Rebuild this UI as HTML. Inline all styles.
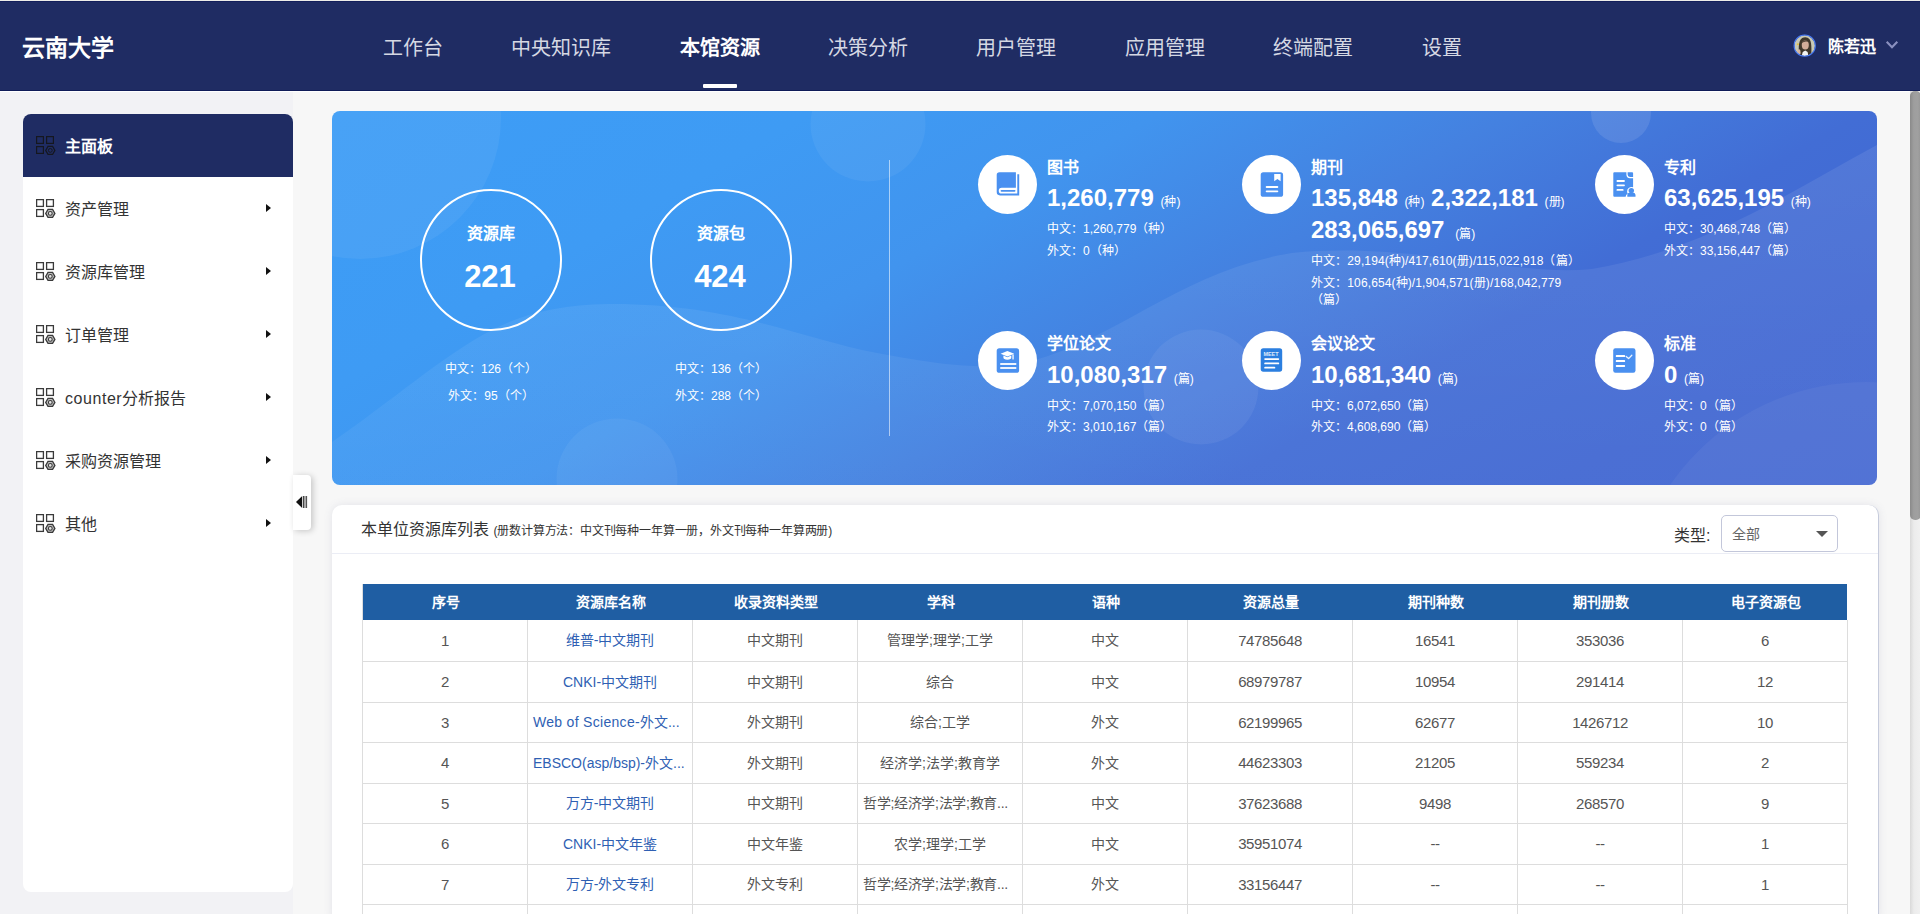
<!DOCTYPE html>
<html lang="zh-CN">
<head>
<meta charset="utf-8">
<title>云南大学</title>
<style>
*{box-sizing:border-box;margin:0;padding:0}
html,body{width:1920px;height:914px;overflow:hidden}
body{position:relative;background:#f7f7f7;font-family:"Liberation Sans",sans-serif;color:#333}
.abs{position:absolute}
#lbg{position:absolute;left:0;top:91px;width:293px;height:823px;background:#f2f2f5}
/* top nav */
#nav{position:absolute;left:0;top:0;width:1920px;height:91px;background:#1f2c63;border-bottom:1px solid #101c58;box-shadow:0 1px 0 #fff}
#logo{position:absolute;left:22px;top:33px;font-size:23px;line-height:30px;font-weight:bold;color:#fff;white-space:nowrap}
.ni{position:absolute;top:33px;font-size:20px;line-height:30px;color:#d5d8e3;white-space:nowrap}
.ni.on{color:#fff;font-weight:bold}
#uline{position:absolute;left:703px;top:84px;width:34px;height:4px;background:#fff;border-radius:1px}
#avatar{position:absolute;left:1793px;top:34.3px;width:23.4px;height:23.4px}
#chev{position:absolute;left:1885px;top:40px}
#uname{position:absolute;left:1827.5px;top:36px;font-size:16px;line-height:22px;font-weight:bold;color:#fff;white-space:nowrap}
/* sidebar */
#side{position:absolute;left:23px;top:114px;width:270px;height:778px;background:#fff;border-radius:8px;overflow:hidden}
.si{position:absolute;left:0;width:270px;height:63px}
.si.on{background:#1f2c63}
.si svg{position:absolute;left:13px;top:22px}
.si .t{position:absolute;left:42px;top:21px;font-size:16px;line-height:24px;color:#333;white-space:nowrap}
.si.on .t{color:#fff;font-weight:bold}
.si .ar{position:absolute;left:243px;top:27px;width:0;height:0;border-left:5px solid #111;border-top:4px solid transparent;border-bottom:4px solid transparent}
#handle{position:absolute;left:293px;top:475px;width:18px;height:55px;background:#fff;border-radius:0 4px 4px 0;box-shadow:2px 1px 6px rgba(0,0,0,.2)}
/* banner */
#ban{position:absolute;left:332px;top:111px;width:1545px;height:374px;border-radius:8px;overflow:hidden;background:linear-gradient(150deg,#3d9df6 0%,#3e9bf4 22%,#4194ee 38%,#4481e0 54%,#426dd5 70%,#4268d2 85%,#4266d1 100%)}

#ban .deco{position:absolute;left:0;top:0}
.ring{position:absolute;width:142px;height:142px;border:2px solid #fff;border-radius:50%;color:#fff;text-align:center}
.rl{position:absolute;left:0;width:138px;top:31px;font-size:16px;line-height:24px;font-weight:bold}
.rn{position:absolute;left:-1px;width:138px;top:66px;font-size:31px;line-height:40px;font-weight:bold}
.rs{position:absolute;width:222px;margin-top:1px;text-align:center;font-size:12px;line-height:20px;color:#fff;white-space:nowrap}
.vline{position:absolute;left:557px;top:49px;width:1px;height:276px;background:rgba(255,255,255,.55)}
.ic{position:absolute;width:59px;height:59px;border-radius:50%;background:#fff}
.ic svg{position:absolute;left:0;top:0}
.st{position:absolute;font-size:16px;line-height:24px;font-weight:bold;color:#fff;white-space:nowrap}
.sn{position:absolute;font-size:24px;line-height:32px;font-weight:bold;color:#fff;white-space:nowrap}
.sn .u{font-size:12px;font-weight:normal;line-height:12px;margin-left:0}
.ss{position:absolute;margin-top:4px;font-size:12px;line-height:17px;color:#fff;white-space:nowrap}
/* card */
#card{position:absolute;left:332px;top:505px;width:1547px;height:420px;background:#fff;border-radius:8px}

#card{border-right:1px solid #c6cbdc;box-shadow:0 0 9px rgba(90,100,140,.13);border-radius:10px}
#ctitle{position:absolute;left:29px;top:13px;font-size:16px;line-height:24px;color:#333;white-space:nowrap}
#ctitle span{font-size:12px;margin-left:0;letter-spacing:-.18px}
#clabel{position:absolute;left:1342px;top:19px;font-size:16px;line-height:24px;color:#333;white-space:nowrap}
#csel{position:absolute;left:1389px;top:10px;width:117px;height:37px;border:1px solid #c3c7da;border-radius:5px;background:#fff}
#csel span{position:absolute;left:10px;top:8px;font-size:14px;line-height:20px;color:#666}
#csel i{position:absolute;left:94px;top:15px;width:0;height:0;border-top:6px solid #555;border-left:6px solid transparent;border-right:6px solid transparent}
#chr{position:absolute;left:0;top:48px;width:1546px;height:1px;background:#ebedf5}
#tbl{position:absolute;left:30px;top:79px;width:1486px;height:340px;border-left:1px solid #ddd}
.th{position:absolute;left:0;top:0;width:1484px;overflow:hidden;height:36px;background:#1f5ea3;display:flex}
.th div{width:165px;flex:none;text-align:center;font-size:14px;line-height:36px;font-weight:bold;color:#fff}
.tr{position:absolute;left:0;width:1485px;display:flex;border-bottom:1px solid #ddd}
.tr div{width:165px;text-align:center;font-size:14px;color:#555;border-right:1px solid #ddd;white-space:nowrap;overflow:hidden}
.tr div.lk{color:#2f5fb3}
.tr div.n{font-size:15px;letter-spacing:-.38px}
.tr div.ov{text-align:left;padding-left:5px}
/* scrollbar */
#sbar{position:absolute;left:1910px;top:91px;width:10px;height:823px;background:linear-gradient(90deg,#d9d9d9,#ececec 40%,#f0f0f0)}
#sthumb{position:absolute;left:0;top:0;width:11px;height:429px;background:linear-gradient(90deg,#8a8a8a,#9e9e9e 35%,#a0a0a0 70%,#969696);border-radius:5px}
</style>
</head>
<body>
<div id="lbg"></div>
<div id="nav">
  <div id="logo">云南大学</div>
  <div class="ni" style="left:383px">工作台</div>
  <div class="ni" style="left:511px">中央知识库</div>
  <div class="ni on" style="left:680px">本馆资源</div>
  <div class="ni" style="left:828px">决策分析</div>
  <div class="ni" style="left:976px">用户管理</div>
  <div class="ni" style="left:1125px">应用管理</div>
  <div class="ni" style="left:1273px">终端配置</div>
  <div class="ni" style="left:1422px">设置</div>
  <div id="uline"></div>
  <div style="position:absolute;left:0;top:0;width:1920px;height:1px;background:#edede8"></div><div style="position:absolute;left:0;top:1px;width:1920px;height:1px;background:#131f5b"></div>
  <svg id="avatar" width="24" height="24" viewBox="0 0 24 24"><defs><clipPath id="ac"><circle cx="12" cy="12" r="10.6"/></clipPath></defs><circle cx="12" cy="12" r="10.6" fill="#c9c9b4"/><g clip-path="url(#ac)"><path d="M6.5 24C5.5 17 5.5 9 8 5.5C10 2.6 15 2.6 17 5.5C19.5 9 19 17 18.5 24Z" fill="#3f372a"/><ellipse cx="12.6" cy="11.3" rx="3.6" ry="4.7" fill="#d2ad98"/><path d="M9.2 9.5C10 6.5 14 5.6 16.3 8.2C15 7.6 12 7.5 9.2 9.5Z" fill="#3f372a"/><path d="M8.5 24L10 18.5L12.6 17L15 18.5L16 24Z" fill="#f4f4f2"/><path d="M4.5 17.5C5 15.5 6.6 15 7.4 16.4L8 20L5.6 21Z" fill="#d6b5a0"/><circle cx="5" cy="10.5" r="1.1" fill="#e6c23a"/></g><circle cx="12" cy="12" r="10.9" fill="none" stroke="#4a7cf6" stroke-width="1.1"/></svg>
  <div id="uname">陈若迅</div>
  <svg id="chev" width="14" height="10" viewBox="0 0 14 10"><path d="M1.7 1.8L7 7.3L12.3 1.8" fill="none" stroke="#8a90bf" stroke-width="2.1"/></svg>
</div>
<div id="side">
<div class="si on" style="top:0px"><svg width="20" height="20" viewBox="0 0 20 20" fill="none" stroke="#15171f" stroke-width="1.2"><rect x="0.6" y="0.6" width="6.8" height="6.8"/><rect x="10.6" y="0.6" width="6.8" height="6.8"/><rect x="0.6" y="10.6" width="6.8" height="6.8"/><path d="M12 10.4h4.6l2.3 4-2.3 4H12l-2.3-4z" fill="none"/><circle cx="14.3" cy="14.4" r="1.9" stroke-width="1"/></svg><div class="t">主面板</div></div>
<div class="si" style="top:63px"><svg width="20" height="20" viewBox="0 0 20 20" fill="none" stroke="#3a3a3a" stroke-width="1.3"><rect x="0.6" y="0.6" width="6.8" height="6.8"/><rect x="10.6" y="0.6" width="6.8" height="6.8"/><rect x="0.6" y="10.6" width="6.8" height="6.8"/><path d="M12 10.4h4.6l2.3 4-2.3 4H12l-2.3-4z" fill="#bdbdbd"/><circle cx="14.3" cy="14.4" r="1.9" stroke-width="1.1" fill="#e4e4e4"/></svg><div class="t">资产管理</div><div class="ar"></div></div>
<div class="si" style="top:126px"><svg width="20" height="20" viewBox="0 0 20 20" fill="none" stroke="#3a3a3a" stroke-width="1.3"><rect x="0.6" y="0.6" width="6.8" height="6.8"/><rect x="10.6" y="0.6" width="6.8" height="6.8"/><rect x="0.6" y="10.6" width="6.8" height="6.8"/><path d="M12 10.4h4.6l2.3 4-2.3 4H12l-2.3-4z" fill="#bdbdbd"/><circle cx="14.3" cy="14.4" r="1.9" stroke-width="1.1" fill="#e4e4e4"/></svg><div class="t">资源库管理</div><div class="ar"></div></div>
<div class="si" style="top:189px"><svg width="20" height="20" viewBox="0 0 20 20" fill="none" stroke="#3a3a3a" stroke-width="1.3"><rect x="0.6" y="0.6" width="6.8" height="6.8"/><rect x="10.6" y="0.6" width="6.8" height="6.8"/><rect x="0.6" y="10.6" width="6.8" height="6.8"/><path d="M12 10.4h4.6l2.3 4-2.3 4H12l-2.3-4z" fill="#bdbdbd"/><circle cx="14.3" cy="14.4" r="1.9" stroke-width="1.1" fill="#e4e4e4"/></svg><div class="t">订单管理</div><div class="ar"></div></div>
<div class="si" style="top:252px"><svg width="20" height="20" viewBox="0 0 20 20" fill="none" stroke="#3a3a3a" stroke-width="1.3"><rect x="0.6" y="0.6" width="6.8" height="6.8"/><rect x="10.6" y="0.6" width="6.8" height="6.8"/><rect x="0.6" y="10.6" width="6.8" height="6.8"/><path d="M12 10.4h4.6l2.3 4-2.3 4H12l-2.3-4z" fill="#bdbdbd"/><circle cx="14.3" cy="14.4" r="1.9" stroke-width="1.1" fill="#e4e4e4"/></svg><div class="t"><span style="letter-spacing:.55px">counter</span>分析报告</div><div class="ar"></div></div>
<div class="si" style="top:315px"><svg width="20" height="20" viewBox="0 0 20 20" fill="none" stroke="#3a3a3a" stroke-width="1.3"><rect x="0.6" y="0.6" width="6.8" height="6.8"/><rect x="10.6" y="0.6" width="6.8" height="6.8"/><rect x="0.6" y="10.6" width="6.8" height="6.8"/><path d="M12 10.4h4.6l2.3 4-2.3 4H12l-2.3-4z" fill="#bdbdbd"/><circle cx="14.3" cy="14.4" r="1.9" stroke-width="1.1" fill="#e4e4e4"/></svg><div class="t">采购资源管理</div><div class="ar"></div></div>
<div class="si" style="top:378px"><svg width="20" height="20" viewBox="0 0 20 20" fill="none" stroke="#3a3a3a" stroke-width="1.3"><rect x="0.6" y="0.6" width="6.8" height="6.8"/><rect x="10.6" y="0.6" width="6.8" height="6.8"/><rect x="0.6" y="10.6" width="6.8" height="6.8"/><path d="M12 10.4h4.6l2.3 4-2.3 4H12l-2.3-4z" fill="#bdbdbd"/><circle cx="14.3" cy="14.4" r="1.9" stroke-width="1.1" fill="#e4e4e4"/></svg><div class="t">其他</div><div class="ar"></div></div>
</div>
<div id="handle"><svg width="18" height="55" viewBox="0 0 18 55"><path d="M3 27L9.2 21V33Z" fill="#111"/><rect x="10" y="21" width="1.5" height="12" fill="#444"/><rect x="12.5" y="21" width="1.6" height="12" fill="#555"/></svg></div>
<div id="ban">
<svg class="deco" width="1545" height="374" viewBox="0 0 1545 374">
<defs><linearGradient id="wg" x1="0" y1="0" x2="0" y2="1"><stop offset="0" stop-color="#fff" stop-opacity=".085"/><stop offset="1" stop-color="#fff" stop-opacity=".045"/></linearGradient></defs>
<circle cx="28" cy="7" r="141" fill="#fff" fill-opacity=".06"/>
<circle cx="536" cy="13" r="57.5" fill="#fff" fill-opacity=".055"/>
<circle cx="285" cy="368" r="60.5" fill="#fff" fill-opacity=".05"/>
<circle cx="869" cy="276" r="57.5" fill="#fff" fill-opacity=".06"/>
<circle cx="1289" cy="2" r="30" fill="#fff" fill-opacity=".1"/>
<circle cx="1534" cy="509" r="238" fill="#fff" fill-opacity=".045"/>
<path d="M0 331C60 290 110 245 160 219C195 201 230 194 275 193C400 192 470 228 545 242C630 258 660 258 700 250C790 225 850 160 960 142C1080 130 1180 166 1260 158C1370 140 1460 80 1545 34V374H0Z" fill="url(#wg)"/>
</svg>
<div class="ring" style="left:88px;top:78px"><div class="rl">资源库</div><div class="rn">221</div></div>
<div class="rs" style="left:48px;top:247px">中文：126（个）</div>
<div class="rs" style="left:48px;top:274px">外文：95（个）</div>
<div class="ring" style="left:318px;top:78px"><div class="rl">资源包</div><div class="rn">424</div></div>
<div class="rs" style="left:278px;top:247px">中文：136（个）</div>
<div class="rs" style="left:278px;top:274px">外文：288（个）</div>
<div class="vline"></div>
<div class="ic" style="left:646px;top:44px"><svg width="59" height="59" viewBox="0 0 59 59"><path fill="#4a90f0" d="M21.5 17.3H37.9V32.7H23.7a2.95 2.95 0 0 0 0 5.9H39.3V19.2H41.2V40.4H22a3.3 3.3 0 0 1-3.3-3.3V20.1a2.8 2.8 0 0 1 2.8-2.8Z"/><rect x="22.6" y="34.9" width="14.9" height="1.8" rx=".9" fill="#4a90f0"/></svg></div><div class="st" style="left:715px;top:45px">图书</div><div class="sn" style="left:715px;top:71px;width:300px">1,260,779 <span class="u">(种)</span></div>
<div class="ss" style="left:715px;top:106px">中文：1,260,779（种）</div><div class="ss" style="left:715px;top:128px">外文：0（种）</div>
<div class="ic" style="left:910px;top:44px"><svg width="59" height="59" viewBox="0 0 59 59"><rect x="18.7" y="17.3" width="22.4" height="24.5" rx="2.6" fill="#4a90f0"/><path fill="#fff" d="M32.2 19.1H38.6V26.2L35.4 24 32.2 26.2Z"/><rect x="23.7" y="31.1" width="12.6" height="1.8" rx=".9" fill="#fff"/><rect x="23.7" y="35.4" width="12.6" height="1.8" rx=".9" fill="#fff"/></svg></div><div class="st" style="left:979px;top:45px">期刊</div><div class="sn" style="left:979px;top:71px;width:300px">135,848 <span class="u">(种)</span> 2,322,181 <span class="u">(册)</span><br>283,065,697 <span class="u" style="margin-left:4px">(篇)</span></div>
<div class="ss" style="left:979px;top:138px;letter-spacing:.11px">中文：29,194(种)/417,610(册)/115,022,918（篇）</div><div class="ss" style="left:979px;top:160px;width:264px;white-space:normal;letter-spacing:.11px">外文：106,654(种)/1,904,571(册)/168,042,779（篇）</div>
<div class="ic" style="left:1263px;top:44px"><svg width="59" height="59" viewBox="0 0 59 59"><path fill="#4a90f0" d="M19.3 17.3H31.4V19.6a3.6 3.6 0 0 0 3.6 3.6H38.1V32.3a4.4 4.4 0 0 0-6 4.1 4.4 4.4 0 0 0 .8 2.6 2.6 2.6 0 0 0-2.2 2.6V41.8H19.3a1 1 0 0 1-1-1V18.3a1 1 0 0 1 1-1Z"/><path fill="#4a90f0" d="M32.6 17.3H37.1a1 1 0 0 1 1 1V21.9H35a2.4 2.4 0 0 1-2.4-2.4Z"/><rect x="21.5" y="25.1" width="8.4" height="1.8" rx=".9" fill="#fff"/><rect x="21.5" y="29.4" width="8.4" height="1.8" rx=".9" fill="#fff"/><rect x="21.5" y="34" width="7.1" height="1.8" rx=".9" fill="#fff"/><circle cx="36.3" cy="35.6" r="2.7" fill="#4a90f0"/><path fill="#4a90f0" d="M32.3 41.8V40.6a3 3 0 0 1 3-3H37.5a3 3 0 0 1 3 3V41.8Z"/></svg></div><div class="st" style="left:1332px;top:45px">专利</div><div class="sn" style="left:1332px;top:71px;width:300px">63,625,195 <span class="u">(种)</span></div>
<div class="ss" style="left:1332px;top:106px">中文：30,468,748（篇）</div><div class="ss" style="left:1332px;top:128px">外文：33,156,447（篇）</div>
<div class="ic" style="left:646px;top:220px"><svg width="59" height="59" viewBox="0 0 59 59"><rect x="18.7" y="17.3" width="22.4" height="24.5" rx="2.6" fill="#4a90f0"/><path fill="#fff" d="M29.4 20.1L36.2 22.8 29.4 25.5 22.6 22.8Z"/><path fill="#fff" d="M25.4 24.6L29.4 26.2 33.3 24.6V26.6a3.95 2.1 0 0 1-7.9 0Z"/><rect x="34.4" y="23.2" width="1.3" height="5.4" rx=".6" fill="#fff"/><rect x="22.2" y="32.1" width="16.1" height="1.9" rx=".5" fill="#fff" fill-opacity=".9"/><rect x="22.2" y="36" width="16.1" height="1.9" rx=".5" fill="#fff" fill-opacity=".9"/></svg></div><div class="st" style="left:715px;top:221px">学位论文</div><div class="sn" style="left:715px;top:248px;width:300px">10,080,317 <span class="u">(篇)</span></div>
<div class="ss" style="left:715px;top:283px">中文：7,070,150（篇）</div><div class="ss" style="left:715px;top:304px">外文：3,010,167（篇）</div>
<div class="ic" style="left:910px;top:220px"><svg width="59" height="59" viewBox="0 0 59 59"><rect x="18.7" y="17.3" width="21.5" height="23.4" rx="2.6" fill="#2b7fe0"/><text x="21.4" y="25.1" font-family="Liberation Sans,sans-serif" font-weight="bold" font-size="5.1" fill="#fff" fill-opacity=".85" textLength="15.2" lengthAdjust="spacingAndGlyphs">MEET</text><rect x="22.2" y="27.2" width="15" height="1.8" rx=".9" fill="#fff"/><rect x="22.2" y="31.5" width="15" height="1.8" rx=".9" fill="#fff"/><rect x="22.2" y="35.8" width="11.1" height="1.8" rx=".9" fill="#fff"/></svg></div><div class="st" style="left:979px;top:221px">会议论文</div><div class="sn" style="left:979px;top:248px;width:300px">10,681,340 <span class="u">(篇)</span></div>
<div class="ss" style="left:979px;top:283px">中文：6,072,650（篇）</div><div class="ss" style="left:979px;top:304px">外文：4,608,690（篇）</div>
<div class="ic" style="left:1263px;top:220px"><svg width="59" height="59" viewBox="0 0 59 59"><rect x="18.2" y="17.3" width="22.3" height="24.5" rx="2.2" fill="#4a90f0"/><rect x="20.8" y="24" width="9.3" height="2.1" rx=".7" fill="#fff"/><rect x="20.8" y="29" width="9.3" height="2.1" rx=".7" fill="#fff"/><rect x="20.8" y="34" width="9.3" height="2" rx=".7" fill="#fff"/><path d="M31.2 25.5L33.6 27.6 36.8 24.3" fill="none" stroke="#fff" stroke-width="1.3" stroke-linecap="round" stroke-linejoin="round" stroke-opacity=".9"/></svg></div><div class="st" style="left:1332px;top:221px">标准</div><div class="sn" style="left:1332px;top:248px;width:300px">0 <span class="u">(篇)</span></div>
<div class="ss" style="left:1332px;top:283px">中文：0（篇）</div><div class="ss" style="left:1332px;top:304px">外文：0（篇）</div>
</div>
<div id="card">
<div id="ctitle">本单位资源库列表 <span>(册数计算方法：中文刊每种一年算一册，外文刊每种一年算两册)</span></div>
<div id="clabel">类型:</div>
<div id="csel"><span>全部</span><i></i></div>
<div id="chr"></div>
<div id="tbl">
<div class="th"><div>序号</div><div>资源库名称</div><div>收录资料类型</div><div>学科</div><div>语种</div><div>资源总量</div><div>期刊种数</div><div>期刊册数</div><div>电子资源包</div></div>
<div class="tr" style="top:36px;height:42px;line-height:41px"><div class="n">1</div><div class=lk>维普-中文期刊</div><div>中文期刊</div><div>管理学;理学;工学</div><div>中文</div><div class="n">74785648</div><div class="n">16541</div><div class="n">353036</div><div class="n">6</div></div>
<div class="tr" style="top:78px;height:41px;line-height:40px"><div class="n">2</div><div class=lk>CNKI-中文期刊</div><div>中文期刊</div><div>综合</div><div>中文</div><div class="n">68979787</div><div class="n">10954</div><div class="n">291414</div><div class="n">12</div></div>
<div class="tr" style="top:119px;height:40px;line-height:39px"><div class="n">3</div><div class="lk ov"><span style="letter-spacing:.3px">Web of Science-</span>外文...</div><div>外文期刊</div><div>综合;工学</div><div>外文</div><div class="n">62199965</div><div class="n">62677</div><div class="n">1426712</div><div class="n">10</div></div>
<div class="tr" style="top:159px;height:41px;line-height:40px"><div class="n">4</div><div class="lk ov">EBSCO(asp/bsp)-外文...</div><div>外文期刊</div><div>经济学;法学;教育学</div><div>外文</div><div class="n">44623303</div><div class="n">21205</div><div class="n">559234</div><div class="n">2</div></div>
<div class="tr" style="top:200px;height:40px;line-height:39px"><div class="n">5</div><div class=lk>万方-中文期刊</div><div>中文期刊</div><div class="ov" style="letter-spacing:-.3px">哲学;经济学;法学;教育...</div><div>中文</div><div class="n">37623688</div><div class="n">9498</div><div class="n">268570</div><div class="n">9</div></div>
<div class="tr" style="top:240px;height:41px;line-height:40px"><div class="n">6</div><div class=lk>CNKI-中文年鉴</div><div>中文年鉴</div><div>农学;理学;工学</div><div>中文</div><div class="n">35951074</div><div class="n">--</div><div class="n">--</div><div class="n">1</div></div>
<div class="tr" style="top:281px;height:40px;line-height:39px"><div class="n">7</div><div class=lk>万方-外文专利</div><div>外文专利</div><div class="ov" style="letter-spacing:-.3px">哲学;经济学;法学;教育...</div><div>外文</div><div class="n">33156447</div><div class="n">--</div><div class="n">--</div><div class="n">1</div></div>
<div class="tr" style="top:321px;height:41px;line-height:40px"><div class="n">8</div><div class=lk></div><div></div><div></div><div></div><div></div><div></div><div></div><div></div></div>
</div>
</div>
<div id="sbar"><div id="sthumb"></div></div>
</body>
</html>
